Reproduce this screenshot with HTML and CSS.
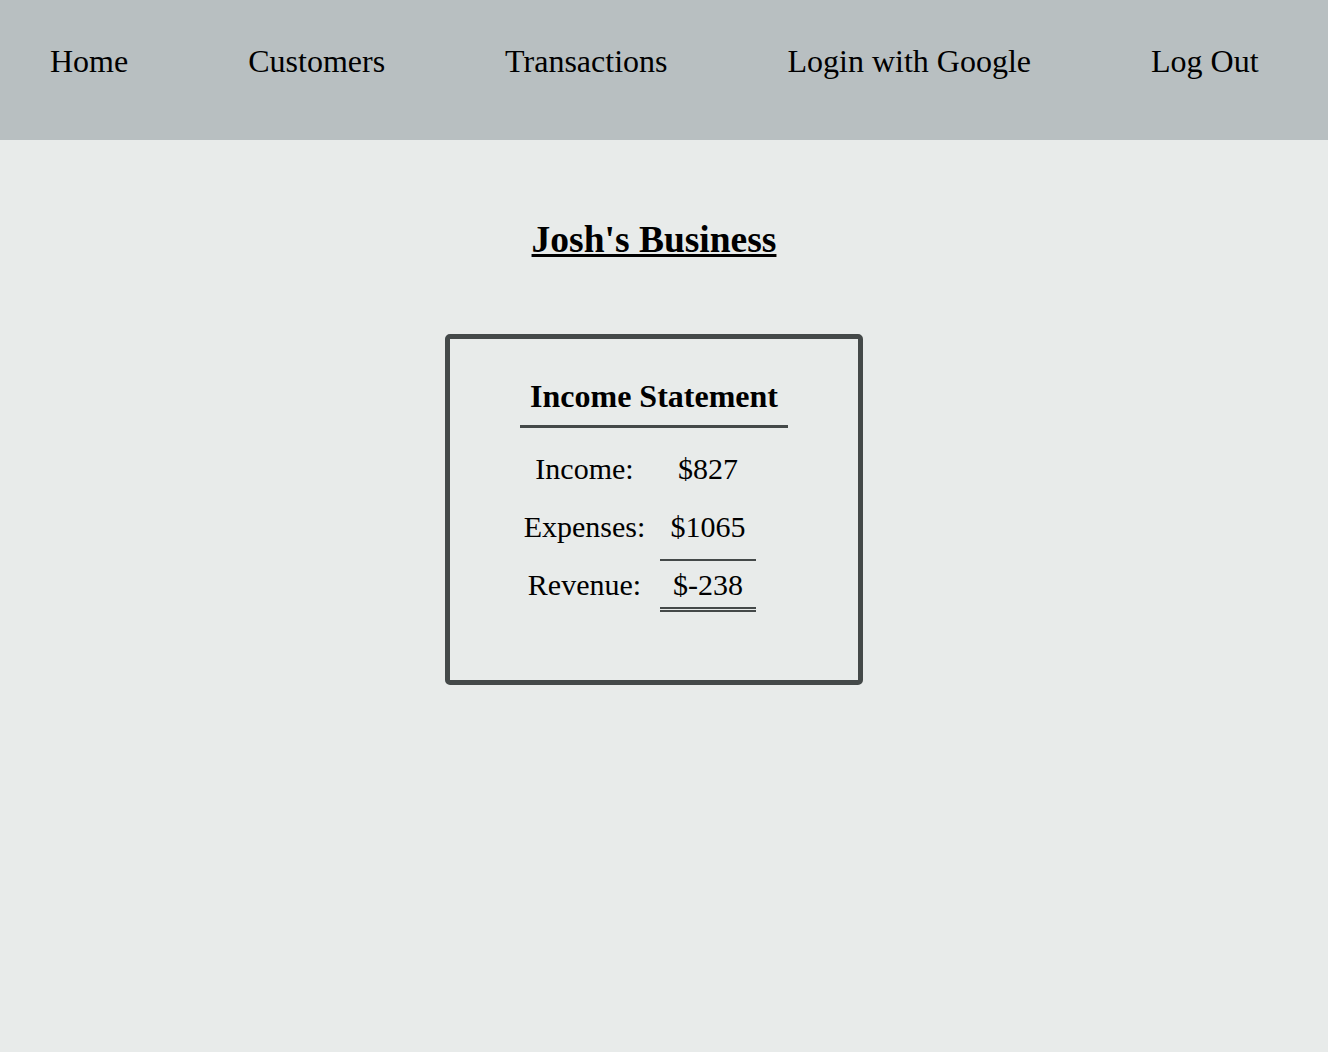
FILE: index.html
```html
<!DOCTYPE html>
<html>
<head>
<meta charset="utf-8">
<title>Josh's Business</title>
<link rel="stylesheet" href="styles.css">
</head>
<body>
<nav class="nav">
  <a class="nav-link" href="#">Home</a>
  <a class="nav-link" href="#">Customers</a>
  <a class="nav-link" href="#">Transactions</a>
  <a class="nav-link" href="#">Login with Google</a>
  <a class="nav-link" href="#">Log Out</a>
</nav>
<main class="main">
  <h1 class="title">Josh's Business</h1>
  <section class="card">
    <div class="statement">
      <h2 class="statement-title">Income Statement</h2>
      <div class="rows">
        <div class="label">Income:</div>
        <div class="value">$827</div>
        <div class="label">Expenses:</div>
        <div class="value value-sub">$1065</div>
        <div class="label">Revenue:</div>
        <div class="value value-total">$-238</div>
      </div>
    </div>
  </section>
</main>
</body>
</html>
```

FILE: styles.css
```css
html, body {
  margin: 0;
  padding: 0;
}
body {
  background: #e8ebea;
  font-family: "Liberation Serif", "Times New Roman", serif;
  color: #000;
  min-height: 1052px;
}
.nav {
  box-sizing: border-box;
  height: 140px;
  background: #b8bfc1;
  display: flex;
  align-items: center;
  gap: 120px;
  padding-left: 50px;
  padding-bottom: 18px;
}
.nav-link {
  font-size: 32px;
  color: #000;
  text-decoration: none;
  line-height: 1.15;
}
.main {
  display: flex;
  flex-direction: column;
  align-items: center;
  padding-right: 20px;
}
.title {
  margin: 78px 0 0;
  font-size: 37.5px;
  font-weight: bold;
  text-decoration: underline;
  line-height: 1.15;
}
.card {
  margin-top: 73px;
  width: 408px;
  border: 5px solid #444949;
  border-radius: 5px;
  padding: 39px 0 68px;
  display: flex;
  justify-content: center;
}
.statement {
  width: 268px;
}
.statement-title {
  margin: 0;
  font-size: 32px;
  font-weight: bold;
  text-align: center;
  line-height: 1.15;
  padding-bottom: 10px;
  border-bottom: 3px solid #444949;
}
.rows {
  margin-top: 24px;
  display: grid;
  grid-template-columns: 129px 96px;
  column-gap: 11px;
  row-gap: 7px;
  font-size: 30px;
  line-height: 1.15;
}
.label {
  text-align: center;
}
.value {
  text-align: center;
  padding-bottom: 14.5px;
  border-bottom: 2px solid transparent;
}
.value-sub {
  border-bottom-color: #444949;
}
.value-total {
  padding-bottom: 5px;
  border-bottom: 5px double #444949;
}
```
